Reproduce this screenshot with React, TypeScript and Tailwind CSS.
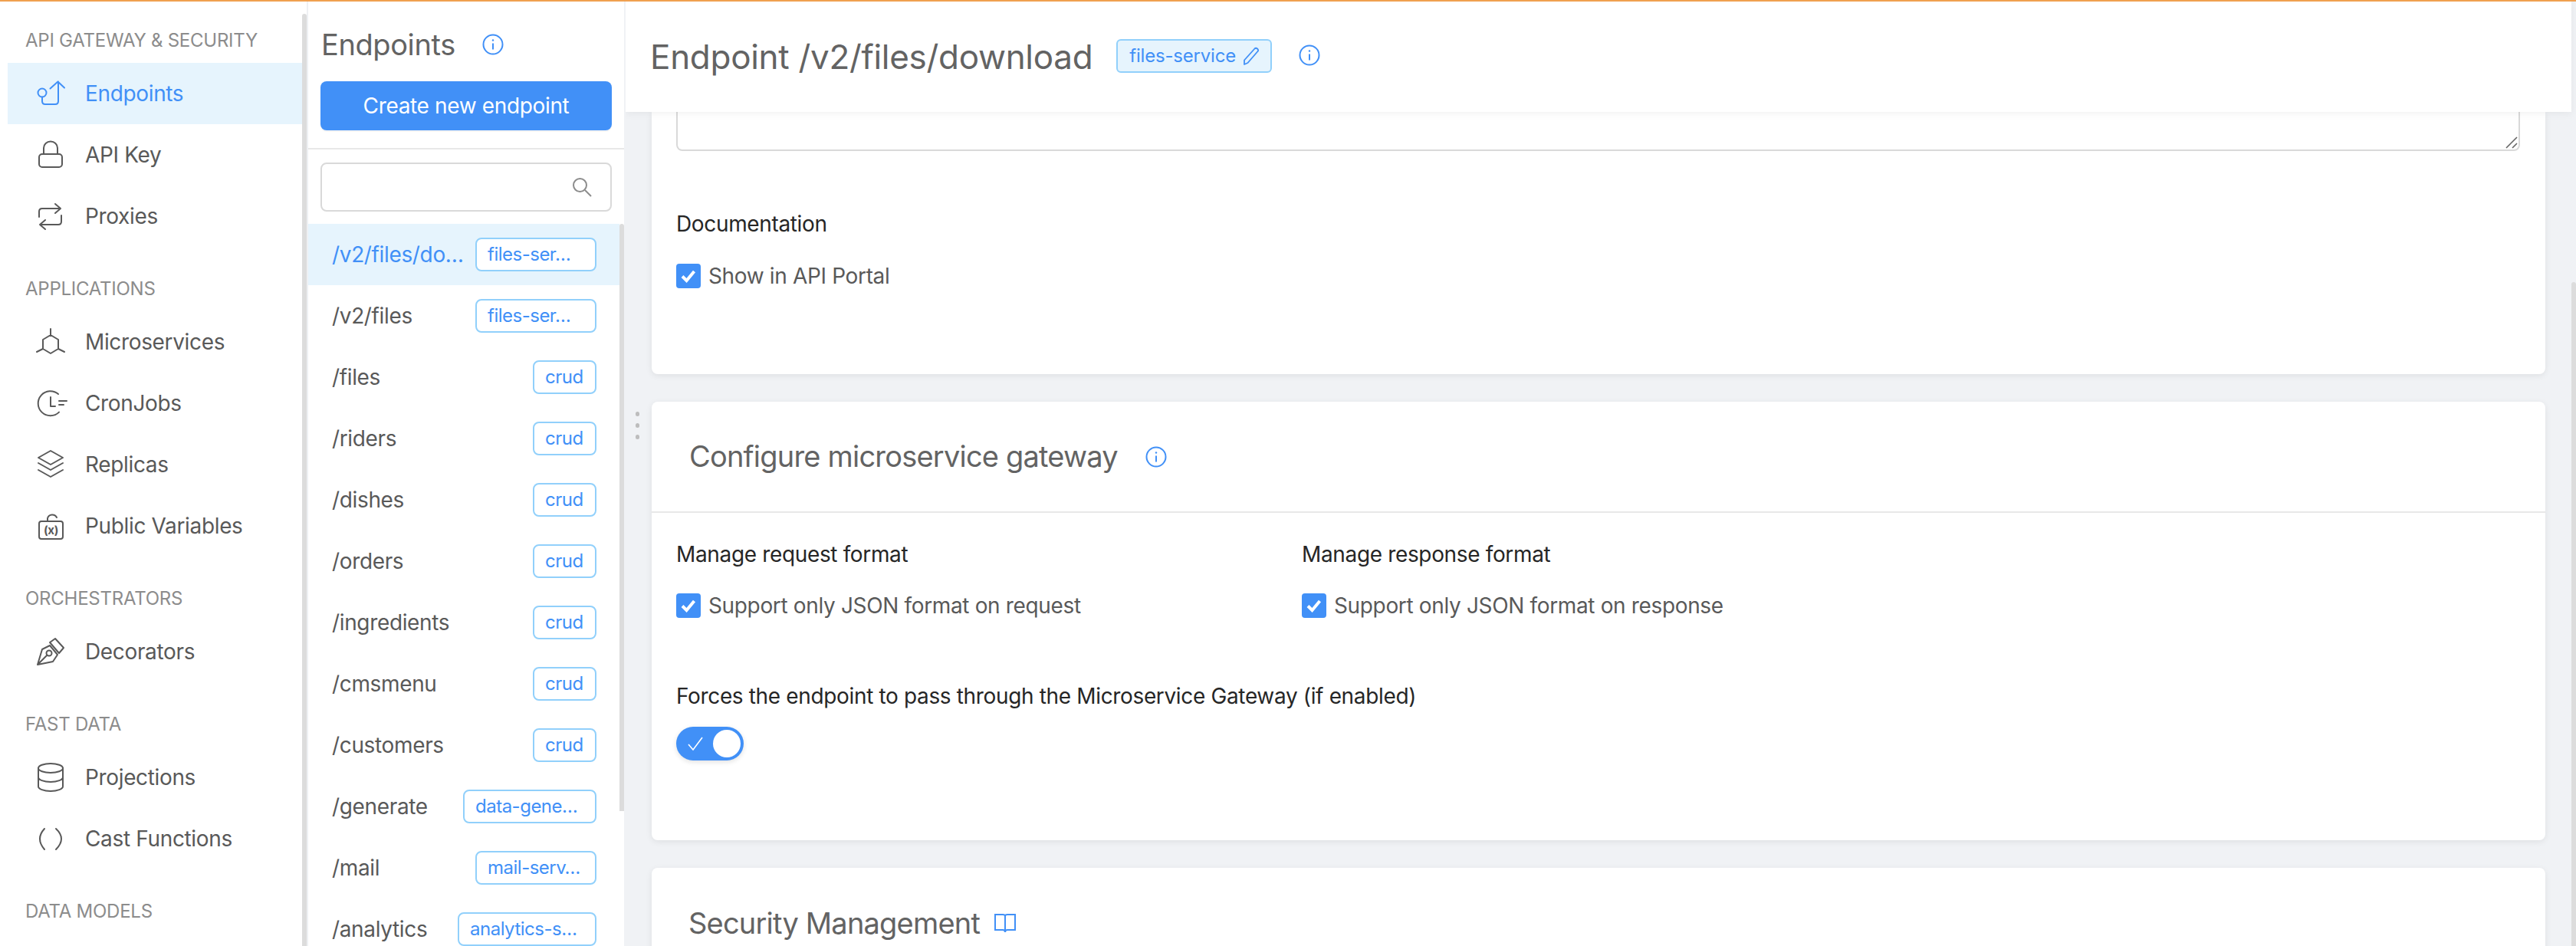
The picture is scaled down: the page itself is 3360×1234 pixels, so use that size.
import type { ReactNode } from "react";

const font = { fontFamily: "Inter, 'Liberation Sans', sans-serif" };

function Icon({ children }: { children: ReactNode }) {
  return (
    <svg viewBox="0 0 40 40" fill="none" stroke="currentColor" strokeWidth="2" strokeLinecap="round" strokeLinejoin="round" className="w-[40px] h-[40px] shrink-0 overflow-visible">
      {children}
    </svg>
  );
}

const icons: Record<string, ReactNode> = {
  endpoints: (
    <>
      <circle cx="9" cy="19" r="5.5" />
      <path d="M9 24.5V30Q9 34 13 34H26Q30 34 30 30V4.5M19.5 13.5L29.5 4.5L38 12.5" />
    </>
  ),
  key: (
    <>
      <rect x="5" y="19" width="30" height="17" rx="4" />
      <path d="M11 19V11A8.5 8 0 0 1 29 11V19" />
    </>
  ),
  proxies: <path d="M5 21V14Q5 10 9 10H33M26 4L33 10L26 16M34 19V27Q34 31 30 31H6M13 25L6 31L13 37" />,
  micro: <path d="M20 11L30 17V29L20 35L10 29V17ZM20 3V11M30 29L38 33M10 29L2 33" />,
  cron: <path d="M30 8A16 16 0 1 0 31 31.6M20 12V24H26M31 17H41M31 22H37" />,
  replicas: <path d="M20 2L36 11L20 20L4 11ZM4 18L20 27L36 18M4 27L20 36L36 27" />,
  vars: (
    <>
      <rect x="5" y="14" width="31" height="23" rx="3" />
      <path d="M16 14V10A6.5 6.5 0 0 1 28 9" />
      <text x="20.5" y="31" textAnchor="middle" fontSize="15" fontWeight="700" fill="currentColor" stroke="none">(x)</text>
    </>
  ),
  decorators: (
    <>
      <path d="M3 37L9 17L19 12L29 24L23 33ZM3 37L15.5 24.5M19 8L26 3L37 15L31 22Z" />
      <circle cx="18" cy="22" r="3.5" />
    </>
  ),
  projections: (
    <>
      <ellipse cx="20" cy="8" rx="16" ry="6" />
      <path d="M4 8V32C4 35 11 38 20 38S36 35 36 32V8M4 20C4 23 11 26 20 26S36 23 36 20" />
    </>
  ),
  cast: <path d="M12 7Q0 20 12 34M27 7Q41 20 27 34" />,
};

const menu = [
  { title: "API Gateway & Security", items: [["Endpoints", "endpoints"], ["API Key", "key"], ["Proxies", "proxies"]] },
  { title: "Applications", items: [["Microservices", "micro"], ["CronJobs", "cron"], ["Replicas", "replicas"], ["Public Variables", "vars"]] },
  { title: "Orchestrators", items: [["Decorators", "decorators"]] },
  { title: "Fast Data", items: [["Projections", "projections"], ["Cast Functions", "cast"]] },
  { title: "Data Models", items: [] },
];

const endpoints = [
  ["/v2/files/do…", "files-ser…"],
  ["/v2/files", "files-ser…"],
  ["/files", "crud"],
  ["/riders", "crud"],
  ["/dishes", "crud"],
  ["/orders", "crud"],
  ["/ingredients", "crud"],
  ["/cmsmenu", "crud"],
  ["/customers", "crud"],
  ["/generate", "data-gene…"],
  ["/mail", "mail-serv…"],
  ["/analytics", "analytics-s…"],
];

function InfoIcon({ size = "w-[28px] h-[28px]" }: { size?: string }) {
  return (
    <svg viewBox="0 0 28 28" fill="none" stroke="#4190f7" strokeWidth="2" className={`${size} shrink-0`}>
      <circle cx="14" cy="14" r="12.5" />
      <path d="M14 12.5V20.5" />
      <circle cx="14" cy="8.5" r="1.2" fill="#4190f7" stroke="none" />
    </svg>
  );
}

function Checkbox({ label }: { label: string }) {
  return (
    <div className="flex items-center gap-[10px]">
      <div className="w-[32px] h-[32px] rounded-[4px] bg-[#4190f7] flex items-center justify-center">
        <svg viewBox="0 0 32 32" fill="none" stroke="#ffffff" strokeWidth="4" className="w-[32px] h-[32px]">
          <path d="M8 16.5L13.5 22L23.5 10" />
        </svg>
      </div>
      <span className="text-[28px] tracking-[-0.35px] leading-[32px] text-[#595959]">{label}</span>
    </div>
  );
}

function Sidebar() {
  return (
    <div className="w-[402px] shrink-0 bg-white flex border-r-2 border-[#eef0f3]">
      <nav className="w-[394px] shrink-0 pl-[10px] pt-[30px]">
        {menu.map((group) => (
          <div key={group.title} className="mb-[34px]">
            <p className="pl-[23px] h-[40px] pt-[1px] flex items-center text-[24px] tracking-[-0.25px] text-[#8c8c8c] uppercase">{group.title}</p>
            <div className="mt-[10px]">
              {group.items.map(([name, icon]) => {
                const active = name === "Endpoints";
                return (
                  <div key={name} className={`h-[80px] pl-[36px] flex items-center gap-[25px] text-[28px] tracking-[-0.35px] ${active ? "bg-[#e6f4fd] text-[#4190f7]" : "text-[#595959]"}`}>
                    <Icon>{icons[icon]}</Icon>
                    <span>{name}</span>
                  </div>
                );
              })}
            </div>
          </div>
        ))}
      </nav>
      <div className="w-[6px] mt-[16px] bg-[#dcdcdc] rounded-t-[3px]" />
    </div>
  );
}

function EndpointList() {
  return (
    <div className="w-[412px] shrink-0 bg-white flex flex-col">
      <div className="h-[193px] px-[16px] pt-[34px] border-b-2 border-[#e8e8e8]">
        <div className="h-[44px] flex items-center gap-[35px] pl-[1px]">
          <h2 className="text-[38px] tracking-[-0.4px] text-[#636363] font-normal">Endpoints</h2>
          <InfoIcon />
        </div>
        <button className="mt-[26px] w-[380px] h-[64px] rounded-[8px] bg-[#4190f7] text-white text-[28px] tracking-[-0.35px] font-normal shadow-[0_2px_0_rgba(0,0,0,0.04)]">Create new endpoint</button>
      </div>
      <div className="h-[97px] px-[16px] pt-[17px]">
        <div className="h-[64px] w-[380px] rounded-[8px] border-2 border-[#d9d9d9] flex items-center justify-end pr-[24px]">
          <svg viewBox="0 0 26 26" fill="none" stroke="#8c8c8c" strokeWidth="2" className="w-[26px] h-[26px]">
            <circle cx="10.5" cy="10.5" r="8.5" />
            <path d="M17 17L25 25" />
          </svg>
        </div>
      </div>
      <div className="flex flex-1 min-h-0 overflow-hidden">
        <div className="w-[406px] shrink-0">
          {endpoints.map(([path, tag], i) => (
            <div key={path} className={`h-[80px] pl-[31px] pr-[30px] flex items-center justify-between text-[28px] tracking-[-0.35px] ${i === 0 ? "bg-[#e6f4fd] text-[#4190f7]" : "text-[#595959]"}`}>
              <span>{path}</span>
              <span className={`h-[44px] pl-[14px] rounded-[8px] border-2 border-[#91d0fb] bg-white text-[24px] tracking-[-0.5px] text-[#4190f7] flex items-center ${tag === "crud" ? "w-[83px]" : tag.startsWith("data") ? "w-[174px]" : tag.startsWith("analytics") ? "w-[181px]" : "w-[158px]"}`}>{tag}</span>
            </div>
          ))}
        </div>
        <div className="w-[6px] h-[766px] bg-[#dcdcdc] rounded-t-[3px]" />
      </div>
    </div>
  );
}

function Main() {
  return (
    <div className="relative flex-1 ml-[2px] min-w-0 flex flex-col overflow-hidden">
      <header className="relative z-10 h-[144px] w-[2538px] shrink-0 bg-white pl-[32px] flex items-center shadow-[0_2px_10px_rgba(0,0,0,0.06)]">
        <h1 className="text-[44px] tracking-[-0.3px] text-[#636363] font-normal">Endpoint /v2/files/download</h1>
        <div className="ml-[31px] h-[44px] w-[203px] mt-[-3px] rounded-[6px] border-2 border-[#91d0fb] bg-[#e6f4fd] flex items-center pl-[15px] gap-[9px] text-[24px] tracking-[-0.2px] text-[#4190f7]">
          <span>files-service</span>
          <svg viewBox="0 0 22 24" fill="none" stroke="#4190f7" strokeWidth="1.8" strokeLinejoin="round" className="w-[22px] h-[24px]">
            <path d="M2 17.5L15.5 2.5Q17 1 19 2.5Q21 4.5 19.5 6L6.5 21L2 23Z" />
          </svg>
        </div>
        <div className="ml-[35px] mt-[-4px]"><InfoIcon /></div>
      </header>

      <div className="absolute left-[13px] top-[535px] flex flex-col gap-[9px]">
        <div className="w-[5px] h-[6px] rounded-full bg-[#bdbdbd]" />
        <div className="w-[5px] h-[6px] rounded-full bg-[#bdbdbd]" />
        <div className="w-[5px] h-[6px] rounded-full bg-[#bdbdbd]" />
      </div>

      <div className="flex flex-1 min-h-0">
        <div className="w-[2538px] shrink-0 px-[34px]">
          <section className="h-[342px] bg-white rounded-b-[8px] px-[32px] shadow-[0_2px_8px_rgba(0,0,0,0.08)]">
            <div className="relative h-[51px] w-[2405px] border-x-2 border-b-2 border-[#d9d9d9] rounded-b-[8px]">
              <svg viewBox="0 0 16 16" fill="none" stroke="#666666" strokeWidth="1.6" className="absolute right-[1px] bottom-[1px] w-[16px] h-[16px]">
                <path d="M1 15L15 1M9 15L15 9" />
              </svg>
            </div>
            <p className="mt-[79px] text-[28px] tracking-[-0.35px] leading-[32px] text-[#262626]">Documentation</p>
            <div className="mt-[36px]"><Checkbox label="Show in API Portal" /></div>
          </section>

          <section className="mt-[36px] h-[572px] bg-white rounded-[8px] shadow-[0_2px_8px_rgba(0,0,0,0.08)]">
            <div className="h-[145px] pl-[49px] flex items-center gap-[36px] border-b-2 border-[#e8e8e8]">
              <h2 className="text-[38px] tracking-[-0.8px] text-[#636363] font-normal">Configure microservice gateway</h2>
              <InfoIcon />
            </div>
            <div className="px-[32px] pt-[38px]">
              <div className="flex">
                <div className="w-[816px]">
                  <p className="text-[28px] tracking-[-0.35px] leading-[32px] text-[#262626]">Manage request format</p>
                  <div className="mt-[35px]"><Checkbox label="Support only JSON format on request" /></div>
                </div>
                <div>
                  <p className="text-[28px] tracking-[-0.35px] leading-[32px] text-[#262626]">Manage response format</p>
                  <div className="mt-[35px]"><Checkbox label="Support only JSON format on response" /></div>
                </div>
              </div>
              <p className="mt-[86px] text-[28px] tracking-[-0.35px] leading-[32px] text-[#262626]">Forces the endpoint to pass through the Microservice Gateway (if enabled)</p>
              <div className="mt-[24px] w-[88px] h-[44px] rounded-full bg-[#4190f7] flex items-center justify-between pl-[14px] pr-[4px] shadow-[0_2px_6px_rgba(0,0,0,0.12)]">
                <svg viewBox="0 0 22 22" fill="none" stroke="#ffffff" strokeWidth="1.6" className="w-[22px] h-[22px]">
                  <path d="M2 12L8 19L20 3" />
                </svg>
                <div className="w-[36px] h-[36px] rounded-full bg-white" />
              </div>
            </div>
          </section>

          <section className="mt-[36px] h-[200px] bg-white rounded-t-[8px] shadow-[0_2px_8px_rgba(0,0,0,0.08)] pl-[48px] pt-[48px]">
            <div className="h-[48px] flex items-center gap-[19px]">
              <h2 className="text-[38px] tracking-[-0.8px] text-[#636363] font-normal">Security Management</h2>
              <svg viewBox="0 0 28 26" fill="none" stroke="#4190f7" strokeWidth="2" className="w-[28px] h-[26px]">
                <path d="M14 4V22M14 4Q14 2 11 2H1V22H11Q14 22 14 25Q14 22 17 22H27V2H17Q14 2 14 4Z" />
              </svg>
            </div>
          </section>
        </div>
        <div className="flex-1 mt-[222px] bg-[#dcdcdc] rounded-t-[3px]" />
      </div>
    </div>
  );
}

export default function App() {
  return (
    <div style={font} className="h-screen overflow-hidden bg-[#f0f2f5] flex flex-col">
      <div className="h-[2px] shrink-0 bg-[#f0a050]" />
      <div className="flex flex-1 min-h-0">
        <Sidebar />
        <EndpointList />
        <Main />
      </div>
    </div>
  );
}
